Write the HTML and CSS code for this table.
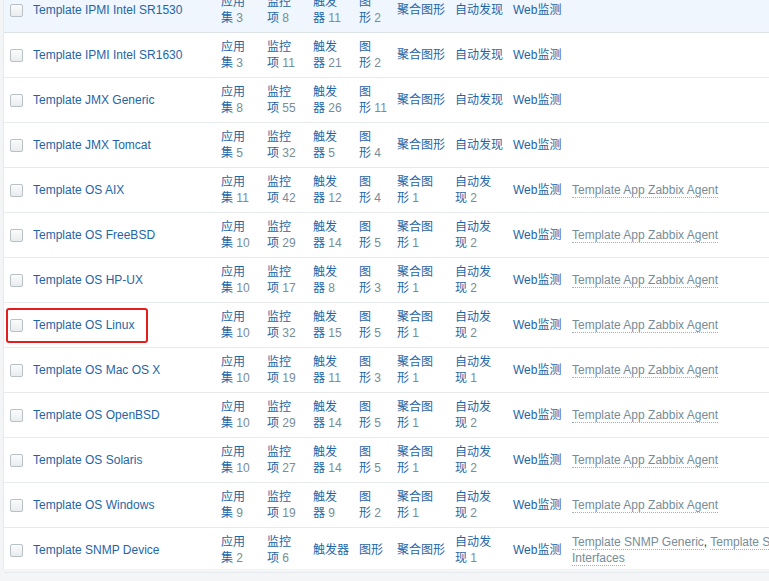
FILE: index.html
```html
<!DOCTYPE html>
<html lang="zh-CN">
<head>
    <meta charset="UTF-8" />
    <meta name="viewport" content="width=device-width, initial-scale=1" />
    <title>模板</title>
    <link rel="stylesheet" href="styles.css">
</head>
<body>
    <div class="page">
        <table class="list-table">
            <colgroup>
                <col class="col-check">
                <col class="col-name">
                <col class="col-short">
                <col class="col-short">
                <col class="col-short">
                <col class="col-graph">
                <col class="col-mid">
                <col class="col-mid">
                <col class="col-web">
                <col class="col-linked">
            </colgroup>
            <tbody>
                <tr class="hover">
                    <td><span class="checkbox"></span></td>
                    <td><a href="#">Template IPMI Intel SR1530</a></td>
                    <td><a href="#">应用</a><br><a href="#">集</a> <sup>3</sup></td>
                    <td><a href="#">监控</a><br><a href="#">项</a> <sup>8</sup></td>
                    <td><a href="#">触发</a><br><a href="#">器</a> <sup>11</sup></td>
                    <td><a href="#">图</a><br><a href="#">形</a> <sup>2</sup></td>
                    <td><a href="#">聚合图形</a></td>
                    <td><a href="#">自动发现</a></td>
                    <td><a href="#">Web监测</a></td>
                    <td></td>
                </tr>
                <tr>
                    <td><span class="checkbox"></span></td>
                    <td><a href="#">Template IPMI Intel SR1630</a></td>
                    <td><a href="#">应用</a><br><a href="#">集</a> <sup>3</sup></td>
                    <td><a href="#">监控</a><br><a href="#">项</a> <sup>11</sup></td>
                    <td><a href="#">触发</a><br><a href="#">器</a> <sup>21</sup></td>
                    <td><a href="#">图</a><br><a href="#">形</a> <sup>2</sup></td>
                    <td><a href="#">聚合图形</a></td>
                    <td><a href="#">自动发现</a></td>
                    <td><a href="#">Web监测</a></td>
                    <td></td>
                </tr>
                <tr>
                    <td><span class="checkbox"></span></td>
                    <td><a href="#">Template JMX Generic</a></td>
                    <td><a href="#">应用</a><br><a href="#">集</a> <sup>8</sup></td>
                    <td><a href="#">监控</a><br><a href="#">项</a> <sup>55</sup></td>
                    <td><a href="#">触发</a><br><a href="#">器</a> <sup>26</sup></td>
                    <td><a href="#">图</a><br><a href="#">形</a> <sup>11</sup></td>
                    <td><a href="#">聚合图形</a></td>
                    <td><a href="#">自动发现</a></td>
                    <td><a href="#">Web监测</a></td>
                    <td></td>
                </tr>
                <tr>
                    <td><span class="checkbox"></span></td>
                    <td><a href="#">Template JMX Tomcat</a></td>
                    <td><a href="#">应用</a><br><a href="#">集</a> <sup>5</sup></td>
                    <td><a href="#">监控</a><br><a href="#">项</a> <sup>32</sup></td>
                    <td><a href="#">触发</a><br><a href="#">器</a> <sup>5</sup></td>
                    <td><a href="#">图</a><br><a href="#">形</a> <sup>4</sup></td>
                    <td><a href="#">聚合图形</a></td>
                    <td><a href="#">自动发现</a></td>
                    <td><a href="#">Web监测</a></td>
                    <td></td>
                </tr>
                <tr>
                    <td><span class="checkbox"></span></td>
                    <td><a href="#">Template OS AIX</a></td>
                    <td><a href="#">应用</a><br><a href="#">集</a> <sup>11</sup></td>
                    <td><a href="#">监控</a><br><a href="#">项</a> <sup>42</sup></td>
                    <td><a href="#">触发</a><br><a href="#">器</a> <sup>12</sup></td>
                    <td><a href="#">图</a><br><a href="#">形</a> <sup>4</sup></td>
                    <td><a href="#">聚合图</a><br><a href="#">形</a> <sup>1</sup></td>
                    <td><a href="#">自动发</a><br><a href="#">现</a> <sup>2</sup></td>
                    <td><a href="#">Web监测</a></td>
                    <td><a href="#" class="link-alt">Template App Zabbix Agent</a></td>
                </tr>
                <tr>
                    <td><span class="checkbox"></span></td>
                    <td><a href="#">Template OS FreeBSD</a></td>
                    <td><a href="#">应用</a><br><a href="#">集</a> <sup>10</sup></td>
                    <td><a href="#">监控</a><br><a href="#">项</a> <sup>29</sup></td>
                    <td><a href="#">触发</a><br><a href="#">器</a> <sup>14</sup></td>
                    <td><a href="#">图</a><br><a href="#">形</a> <sup>5</sup></td>
                    <td><a href="#">聚合图</a><br><a href="#">形</a> <sup>1</sup></td>
                    <td><a href="#">自动发</a><br><a href="#">现</a> <sup>2</sup></td>
                    <td><a href="#">Web监测</a></td>
                    <td><a href="#" class="link-alt">Template App Zabbix Agent</a></td>
                </tr>
                <tr>
                    <td><span class="checkbox"></span></td>
                    <td><a href="#">Template OS HP-UX</a></td>
                    <td><a href="#">应用</a><br><a href="#">集</a> <sup>10</sup></td>
                    <td><a href="#">监控</a><br><a href="#">项</a> <sup>17</sup></td>
                    <td><a href="#">触发</a><br><a href="#">器</a> <sup>8</sup></td>
                    <td><a href="#">图</a><br><a href="#">形</a> <sup>3</sup></td>
                    <td><a href="#">聚合图</a><br><a href="#">形</a> <sup>1</sup></td>
                    <td><a href="#">自动发</a><br><a href="#">现</a> <sup>2</sup></td>
                    <td><a href="#">Web监测</a></td>
                    <td><a href="#" class="link-alt">Template App Zabbix Agent</a></td>
                </tr>
                <tr>
                    <td class="marked"><span class="checkbox"></span><span class="highlight-box"></span></td>
                    <td><a href="#">Template OS Linux</a></td>
                    <td><a href="#">应用</a><br><a href="#">集</a> <sup>10</sup></td>
                    <td><a href="#">监控</a><br><a href="#">项</a> <sup>32</sup></td>
                    <td><a href="#">触发</a><br><a href="#">器</a> <sup>15</sup></td>
                    <td><a href="#">图</a><br><a href="#">形</a> <sup>5</sup></td>
                    <td><a href="#">聚合图</a><br><a href="#">形</a> <sup>1</sup></td>
                    <td><a href="#">自动发</a><br><a href="#">现</a> <sup>2</sup></td>
                    <td><a href="#">Web监测</a></td>
                    <td><a href="#" class="link-alt">Template App Zabbix Agent</a></td>
                </tr>
                <tr>
                    <td><span class="checkbox"></span></td>
                    <td><a href="#">Template OS Mac OS X</a></td>
                    <td><a href="#">应用</a><br><a href="#">集</a> <sup>10</sup></td>
                    <td><a href="#">监控</a><br><a href="#">项</a> <sup>19</sup></td>
                    <td><a href="#">触发</a><br><a href="#">器</a> <sup>11</sup></td>
                    <td><a href="#">图</a><br><a href="#">形</a> <sup>3</sup></td>
                    <td><a href="#">聚合图</a><br><a href="#">形</a> <sup>1</sup></td>
                    <td><a href="#">自动发</a><br><a href="#">现</a> <sup>1</sup></td>
                    <td><a href="#">Web监测</a></td>
                    <td><a href="#" class="link-alt">Template App Zabbix Agent</a></td>
                </tr>
                <tr>
                    <td><span class="checkbox"></span></td>
                    <td><a href="#">Template OS OpenBSD</a></td>
                    <td><a href="#">应用</a><br><a href="#">集</a> <sup>10</sup></td>
                    <td><a href="#">监控</a><br><a href="#">项</a> <sup>29</sup></td>
                    <td><a href="#">触发</a><br><a href="#">器</a> <sup>14</sup></td>
                    <td><a href="#">图</a><br><a href="#">形</a> <sup>5</sup></td>
                    <td><a href="#">聚合图</a><br><a href="#">形</a> <sup>1</sup></td>
                    <td><a href="#">自动发</a><br><a href="#">现</a> <sup>2</sup></td>
                    <td><a href="#">Web监测</a></td>
                    <td><a href="#" class="link-alt">Template App Zabbix Agent</a></td>
                </tr>
                <tr>
                    <td><span class="checkbox"></span></td>
                    <td><a href="#">Template OS Solaris</a></td>
                    <td><a href="#">应用</a><br><a href="#">集</a> <sup>10</sup></td>
                    <td><a href="#">监控</a><br><a href="#">项</a> <sup>27</sup></td>
                    <td><a href="#">触发</a><br><a href="#">器</a> <sup>14</sup></td>
                    <td><a href="#">图</a><br><a href="#">形</a> <sup>5</sup></td>
                    <td><a href="#">聚合图</a><br><a href="#">形</a> <sup>1</sup></td>
                    <td><a href="#">自动发</a><br><a href="#">现</a> <sup>2</sup></td>
                    <td><a href="#">Web监测</a></td>
                    <td><a href="#" class="link-alt">Template App Zabbix Agent</a></td>
                </tr>
                <tr>
                    <td><span class="checkbox"></span></td>
                    <td><a href="#">Template OS Windows</a></td>
                    <td><a href="#">应用</a><br><a href="#">集</a> <sup>9</sup></td>
                    <td><a href="#">监控</a><br><a href="#">项</a> <sup>19</sup></td>
                    <td><a href="#">触发</a><br><a href="#">器</a> <sup>9</sup></td>
                    <td><a href="#">图</a><br><a href="#">形</a> <sup>2</sup></td>
                    <td><a href="#">聚合图</a><br><a href="#">形</a> <sup>1</sup></td>
                    <td><a href="#">自动发</a><br><a href="#">现</a> <sup>2</sup></td>
                    <td><a href="#">Web监测</a></td>
                    <td><a href="#" class="link-alt">Template App Zabbix Agent</a></td>
                </tr>
                <tr>
                    <td><span class="checkbox"></span></td>
                    <td><a href="#">Template SNMP Device</a></td>
                    <td><a href="#">应用</a><br><a href="#">集</a> <sup>2</sup></td>
                    <td><a href="#">监控</a><br><a href="#">项</a> <sup>6</sup></td>
                    <td><a href="#">触发器</a></td>
                    <td><a href="#">图形</a></td>
                    <td><a href="#">聚合图形</a></td>
                    <td><a href="#">自动发</a><br><a href="#">现</a> <sup>1</sup></td>
                    <td><a href="#">Web监测</a></td>
                    <td><a href="#" class="link-alt">Template SNMP Generic</a>, <a href="#" class="link-alt">Template SNMP Interfaces</a></td>
                </tr>
            </tbody>
        </table>
    </div>
</body>
</html>
```

FILE: styles.css
```css
html, body {
    margin: 0;
    height: 100%;
}
body {
    font-family: 'Liberation Sans', Arial, 'Noto Sans CJK SC', sans-serif;
    font-size: 12px;
    color: #1f2c33;
    background-color: #f4f5f6;
    overflow: hidden;
    padding-left: 3px;
}
.page {
    background: #fff;
    border-left: 1px solid #e6e9eb;
    height: 100%;
}
a {
    color: #1f65a6;
    text-decoration: none;
}
sup {
    vertical-align: baseline;
    font-size: 12px;
    color: #768d99;
}
.list-table {
    table-layout: fixed;
    width: 808px;
    border-collapse: collapse;
    margin-top: -12px;
}
.col-check { width: 29px; }
.col-name { width: 188px; }
.col-short { width: 46px; }
.col-graph { width: 38px; }
.col-mid { width: 58px; }
.col-web { width: 59px; }
.col-linked { width: 244px; }
.list-table td {
    height: 44px;
    padding: 0;
    line-height: 16px;
    vertical-align: middle;
    border-bottom: 1px solid #e8ebed;
    white-space: nowrap;
}
.list-table td:last-child {
    white-space: normal;
}
.list-table td:first-child {
    padding-left: 6px;
}
.list-table tr.hover td {
    background-color: #eff6fd;
    border-bottom-color: #dde2e6;
}
.checkbox {
    display: block;
    width: 11px;
    height: 11px;
    border: 1px solid #b8c1c6;
    border-radius: 2px;
    background: linear-gradient(#fbfbfb, #e9ecee);
}
.link-alt {
    color: #768d99;
    border-bottom: 1px dotted #9fb0b9;
}
.marked {
    position: relative;
}
.highlight-box {
    position: absolute;
    left: 2px;
    top: 5px;
    width: 142px;
    height: 35px;
    box-sizing: border-box;
    border: 2px solid #e41e1e;
    border-radius: 3px;
}
```
